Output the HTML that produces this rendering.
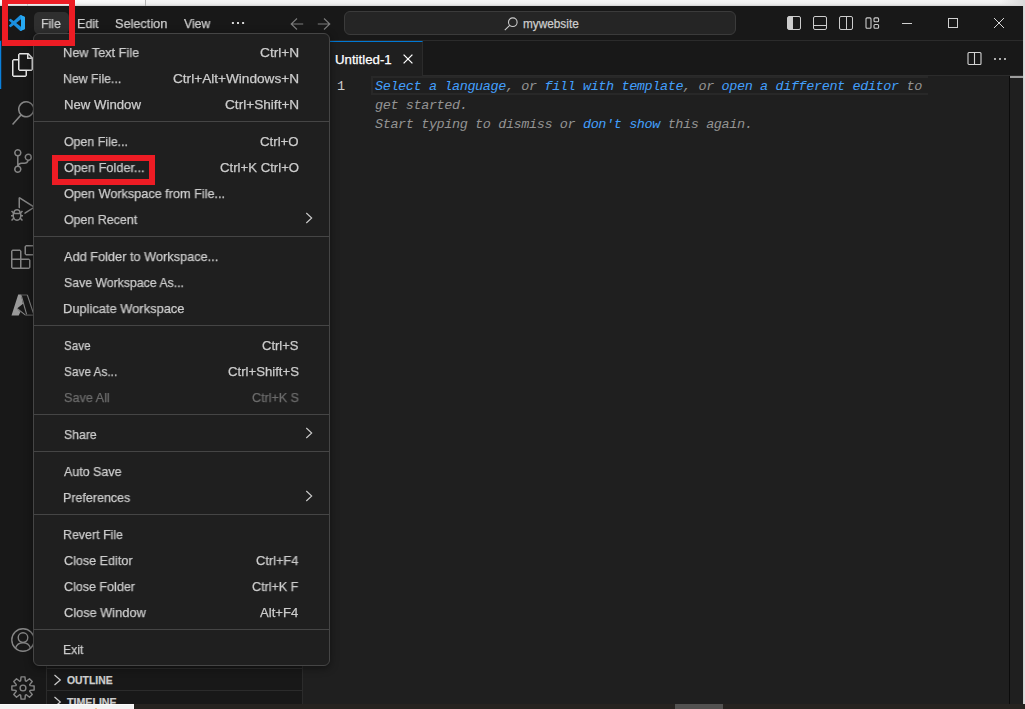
<!DOCTYPE html>
<html>
<head>
<meta charset="utf-8">
<title>mywebsite - Visual Studio Code</title>
<style>
*{box-sizing:border-box;margin:0;padding:0}
html,body{width:1025px;height:709px;overflow:hidden;background:#f3f3f3}
body{font-family:"Liberation Sans",sans-serif;font-size:13px;color:#ccc;position:relative}
.abs{position:absolute}
.t{position:absolute;white-space:pre;height:20px;transform-origin:0 50%;-webkit-text-stroke:0.25px currentColor}
#win{left:0;top:6px;width:1023px;height:698px;background:#1f1f1f}
#titlebar{left:0;top:6px;width:1023px;height:35px;background:#181818;border-bottom:1px solid #2b2b2b}
#filebtn{left:34px;top:12px;width:35px;height:22px;background:#2f2f2f;border-radius:5px}
#search{left:344px;top:11px;width:392px;height:24px;background:#252525;border:1px solid #3b3b3b;border-radius:6px}
#activity{left:0;top:41px;width:47px;height:663px;background:#181818;border-right:1px solid #2b2b2b}
#sidebar{left:47px;top:41px;width:256px;height:663px;background:#181818;border-right:1px solid #2b2b2b}
#tabs{left:303px;top:41px;width:720px;height:35px;background:#181818;border-bottom:1px solid #2b2b2b}
#tab{left:303px;top:41px;width:120px;height:35px;background:#1f1f1f;border-top:1px solid #0078d4;border-right:1px solid #2b2b2b}
.code{position:absolute;font-family:"Liberation Mono",monospace;font-size:13.5px;letter-spacing:-0.4px;font-style:italic;color:#939393;white-space:pre;height:19px;line-height:19px;left:375px}
.code b{font-weight:normal;color:#439ffc}
#menu{left:33px;top:33px;width:297px;height:633px;background:#1f1f1f;border:1px solid #454545;border-radius:6px;box-shadow:0 2px 8px rgba(0,0,0,.45)}
.sep{left:34px;width:295px;height:1px;background:#454545}
.red{border:6px solid #ed1c24}
svg{overflow:visible}
</style>
</head>
<body>
<!-- desktop behind the window -->
<div class="abs" style="left:0;top:0;width:1025px;height:6px;background:linear-gradient(#f4f4f4 0,#f0f0f0 50%,#e2e2e2 85%,#c9c9c9 100%)"></div>
<div class="abs" style="left:0;top:0;width:145px;height:5px;background:linear-gradient(#f9f9f9 0,#f4f4f4 60%,#e4e4e4 100%)"></div>
<div class="abs" style="left:27px;top:0;width:1px;height:6px;background:#c4c4c4"></div>
<div class="abs" style="left:145px;top:0;width:1px;height:6px;background:#b4b4b4"></div>
<div class="abs" style="left:1023px;top:0;width:2px;height:709px;background:linear-gradient(90deg,#cfcfcf,#e2e2e2)"></div>
<div class="abs" style="left:1000px;top:0;width:25px;height:6px;background:linear-gradient(90deg,rgba(215,215,215,0),#dadada)"></div>

<div id="win" class="abs"></div>
<div id="titlebar" class="abs"></div>
<div id="filebtn" class="abs"></div>
<div id="search" class="abs"></div>

<div id="activity" class="abs"></div>
<div id="sidebar" class="abs"></div>
<div id="tabs" class="abs"></div>
<div id="tab" class="abs"></div>

<!-- editor -->
<div class="abs" style="left:371px;top:76px;width:557px;height:19px;border:2px solid #282828;border-right:none"></div>
<div class="code" style="left:337px;top:77px;font-style:normal;color:#cccccc">1</div>
<div class="code" style="top:77px"><b>Select a language</b>, or <b>fill with template</b>, or <b>open a different editor</b> to</div>
<div class="code" style="top:96px">get started.</div>
<div class="code" style="top:115px">Start typing to dismiss or <b>don't show</b> this again.</div>
<!-- scrollbar / overview ruler -->
<div class="abs" style="left:1009px;top:76px;width:1px;height:628px;background:#0b0b0b"></div>
<div class="abs" style="left:1010px;top:76px;width:13px;height:2px;background:#9c9c9c"></div>

<!-- sidebar panes -->
<div class="abs" style="left:47px;top:668px;width:255px;height:1px;background:#2b2b2b"></div>
<div class="abs" style="left:47px;top:690px;width:255px;height:1px;background:#2b2b2b"></div>


<!-- vscode logo -->
<svg class="abs" style="left:9px;top:15px" width="16" height="16" viewBox="0 0 100 100">
  <path d="M96.5 10.8 75.9.9a6.2 6.2 0 0 0-7.1 1.2L29.4 38 12.200 25a4.200 4.200 0 0 0-5.300.200L1.400 30.300a4.200 4.200 0 0 0 0 6.200L16.300 50 1.400 63.600a4.200 4.200 0 0 0 0 6.200l5.500 5a4.200 4.200 0 0 0 5.300.200L29.400 62l39.400 36a6.200 6.200 0 0 0 7.100 1.200l20.600-9.900A6.200 6.200 0 0 0 100 83.600V16.400a6.200 6.200 0 0 0-3.500-5.600ZM75 72.700 45.100 50 75 27.300Z" fill="#1b8fe0"/>
  <path d="M75.900.9a6.200 6.200 0 0 0-4.400-.3L75 27.300v45.400l-3.500 26.700a6.200 6.200 0 0 0 4.400-.300l20.600-9.900A6.200 6.200 0 0 0 100 83.600V16.400a6.200 6.200 0 0 0-3.500-5.600Z" fill="#27a9f2"/>
</svg>
<!-- title bar: dots, arrows, search icon -->
<svg class="abs" style="left:230px;top:20px" width="16" height="6" viewBox="0 0 16 6"><rect x="1.900" y="2" width="2" height="2" fill="#d6d6d6"/><rect x="7" y="2" width="2" height="2" fill="#d6d6d6"/><rect x="12.100" y="2" width="2" height="2" fill="#d6d6d6"/></svg>
<svg class="abs" style="left:288.400px;top:15.500px" width="16" height="16" viewBox="0 0 16 16"><path d="M9 2.500 3.200 8 9 13.500M3.200 8H15.200" fill="none" stroke="#7c7c7c" stroke-width="1.100"/></svg>
<svg class="abs" style="left:317px;top:15.500px" width="16" height="16" viewBox="0 0 16 16"><path d="M7 2.500 12.800 8 7 13.500M12.800 8H.8" fill="none" stroke="#7c7c7c" stroke-width="1.100"/></svg>
<svg class="abs" style="left:503px;top:15.500px" width="16" height="16" viewBox="0 0 16 16"><circle cx="9.800" cy="6.200" r="4.300" fill="none" stroke="#ccc" stroke-width="1.100"/><path d="M6.700 9.300 1.800 14.200" stroke="#ccc" stroke-width="1.100"/></svg>
<!-- layout controls -->
<svg class="abs" style="left:787px;top:16px" width="14" height="14" viewBox="0 0 14 14"><rect x=".5" y=".5" width="13" height="13" rx="1.500" fill="none" stroke="#ccc"/><path d="M1 1h5v12H1z" fill="#ccc"/></svg>
<svg class="abs" style="left:813px;top:16px" width="14" height="14" viewBox="0 0 14 14"><rect x=".5" y=".5" width="13" height="13" rx="1.500" fill="none" stroke="#ccc"/><path d="M1 9.500h12" stroke="#ccc"/></svg>
<svg class="abs" style="left:839px;top:16px" width="14" height="14" viewBox="0 0 14 14"><rect x=".5" y=".5" width="13" height="13" rx="1.500" fill="none" stroke="#ccc"/><path d="M7.500 1v12" stroke="#ccc"/></svg>
<svg class="abs" style="left:865px;top:16px" width="15" height="14" viewBox="0 0 15 14"><rect x="1" y="1.900" width="5" height="10.400" rx="1" fill="none" stroke="#ccc" stroke-width="1.100"/><rect x="9" y="1.900" width="4.600" height="3.800" rx="1" fill="none" stroke="#ccc" stroke-width="1.100"/><rect x="9" y="8.500" width="4.600" height="3.800" rx="1" fill="none" stroke="#ccc" stroke-width="1.100"/></svg>
<!-- window controls -->
<div class="abs" style="left:902px;top:23px;width:10px;height:1px;background:#d0d0d0"></div>
<div class="abs" style="left:948px;top:18px;width:10px;height:10px;border:1px solid #d0d0d0"></div>
<svg class="abs" style="left:994px;top:18px" width="10" height="10" viewBox="0 0 10 10"><path d="M0 0 10 10M10 0 0 10" stroke="#d8d8d8" stroke-width="1"/></svg>
<!-- tab close + editor actions -->
<svg class="abs" style="left:403px;top:54px" width="10" height="10" viewBox="0 0 10 10"><path d="M.6.600 9.400 9.400M9.400.600.600 9.400" stroke="#fff" stroke-width="1.300"/></svg>
<svg class="abs" style="left:967px;top:51px" width="15" height="15" viewBox="0 0 15 15"><rect x="1" y="1.500" width="13" height="12" rx="1" fill="none" stroke="#d4d4d4" stroke-width="1.100"/><path d="M7.500 1.500v12" stroke="#d4d4d4" stroke-width="1.100"/></svg>
<svg class="abs" style="left:992px;top:56px" width="16" height="6" viewBox="0 0 16 6"><circle cx="3" cy="3" r="1.050" fill="#d4d4d4"/><circle cx="8" cy="3" r="1.050" fill="#d4d4d4"/><circle cx="13" cy="3" r="1.050" fill="#d4d4d4"/></svg>

<!-- activity bar -->
<div class="abs" style="left:0;top:41px;width:1px;height:48px;background:#0a80dc"></div><div class="abs" style="left:1px;top:41px;width:1px;height:48px;background:#0078d4;opacity:.25"></div>
<svg class="abs" style="left:11px;top:53px" width="24" height="24" viewBox="0 0 24 24"><path fill="#e6e6e6" d="M17.500 0h-9L7 1.500V6H2.500L1 7.500v15.070L2.500 24h12.070L16 22.570V18h4.700l1.300-1.430V4.500L17.500 0zm0 2.120l2.380 2.380H17.500V2.120zm-3 20.380h-12v-15H7v9.070L8.500 18h6v4.500zm6-6h-12v-15H16V6h4.500v10.500z"/></svg>
<svg class="abs" style="left:11px;top:101px" width="24" height="24" viewBox="0 0 24 24"><path fill="#858585" d="M15.250 0a8.250 8.250 0 0 0-6.180 13.720L1 22.880l1.120 1.120 8.050-9.120A8.251 8.251 0 1 0 15.250.010V0zm0 15a6.750 6.750 0 1 1 0-13.500 6.750 6.750 0 0 1 0 13.500z"/></svg>
<svg class="abs" style="left:11px;top:149px" width="24" height="24" viewBox="0 0 24 24"><path fill="#858585" d="M21.007 8.222A3.738 3.738 0 0 0 15.045 5.200a3.737 3.737 0 0 0 1.156 6.583 2.988 2.988 0 0 1-2.668 1.670h-2.990a4.456 4.456 0 0 0-2.989 1.165V7.400a3.737 3.737 0 1 0-1.494 0v9.117a3.776 3.776 0 1 0 1.816.099 2.990 2.990 0 0 1 2.668-1.667h2.990a4.484 4.484 0 0 0 4.223-3.039 3.736 3.736 0 0 0 3.250-3.687zM4.565 3.738a2.242 2.242 0 1 1 4.484 0 2.242 2.242 0 0 1-4.484 0zm4.484 16.441a2.242 2.242 0 1 1-4.484 0 2.242 2.242 0 0 1 4.484 0zm8.221-9.715a2.242 2.242 0 1 1 0-4.485 2.242 2.242 0 0 1 0 4.485z"/></svg>
<svg class="abs" style="left:11px;top:197px" width="24" height="24" viewBox="0 0 24 24"><path fill="#858585" d="M10.940 13.500l-1.320 1.320a3.730 3.730 0 0 0-7.240 0L1.060 13.500 0 14.560l1.720 1.720-.22.220V18H0v1.500h1.500v.080c.077.489.214.966.410 1.420L0 22.940 1.060 24l1.650-1.650A4.308 4.308 0 0 0 6 24a4.310 4.310 0 0 0 3.290-1.650L10.940 24 12 22.940 10.090 21c.198-.464.336-.951.410-1.450v-.1H12V18h-1.500v-1.500l-.22-.22L12 14.560l-1.060-1.060zM6 13.500a2.250 2.250 0 0 1 2.250 2.250h-4.500A2.250 2.250 0 0 1 6 13.500zm3 6a3.330 3.330 0 0 1-3 3 3.330 3.330 0 0 1-3-3v-2.250h6v2.250zm14.760-9.900v1.260L13.500 17.370V15.600l8.500-5.370L9 2v9.460a5.070 5.070 0 0 0-1.500-.72V.630L8.640 0l15.120 9.600z"/></svg>
<svg class="abs" style="left:11px;top:245px" width="24" height="24" viewBox="0 0 24 24"><path fill="#858585" d="M13.500 1.500L15 0h7.500L24 1.500V9l-1.500 1.500H15L13.500 9V1.500zm1.500 0V9h7.500V1.500H15zM0 15V6l1.500-1.500H9L10.500 6v7.500H18l1.500 1.500v7.500L18 24H1.500L0 22.500V15zm9-1.500V6H1.500v7.500H9zM9 15H1.500v7.500H9V15zm1.500 7.500H18V15h-7.500v7.500z"/></svg>
<!-- azure -->
<svg class="abs" style="left:11px;top:293px" width="24" height="24" viewBox="0 0 24 24"><path d="M7.200 1.500H9.900L12 10.800 6 15.400l3.400 3.600-1.700 3.600H.5Z" fill="#9a9a9a"/><path d="M10.100 1.800 15.600 21.300M16.300 1.800 23 22M6 15.400l8.200 6.500" fill="none" stroke="#858585" stroke-width="1.100"/><path d="M9.900 2H16.300" stroke="#5a5a5a" stroke-width="1"/><path d="M14.200 22.100H23" stroke="#6a6a6a" stroke-width="1"/></svg>
<!-- account -->
<svg class="abs" style="left:11px;top:628px" width="24" height="24" viewBox="0 0 24 24"><circle cx="12" cy="12" r="11.200" fill="none" stroke="#858585" stroke-width="1.400"/><circle cx="12" cy="9.600" r="4.800" fill="none" stroke="#858585" stroke-width="1.400"/><path d="M4.500 20.300c1-3.400 3.900-5.500 7.500-5.500s6.500 2.100 7.500 5.500" fill="none" stroke="#858585" stroke-width="1.400"/></svg>
<!-- gear -->
<svg class="abs" style="left:11px;top:676px" width="24" height="24" viewBox="0 0 24 24"><path d="M9.63 4.89 L10.06 0.87 L13.94 0.87 L14.37 4.89 L15.35 5.29 L18.50 2.75 L21.25 5.50 L18.71 8.65 L19.11 9.63 L23.13 10.06 L23.13 13.94 L19.11 14.37 L18.71 15.35 L21.25 18.50 L18.50 21.25 L15.35 18.71 L14.37 19.11 L13.94 23.13 L10.06 23.13 L9.63 19.11 L8.65 18.71 L5.50 21.25 L2.75 18.50 L5.29 15.35 L4.89 14.37 L0.87 13.94 L0.87 10.06 L4.89 9.63 L5.29 8.65 L2.75 5.50 L5.50 2.75 L8.65 5.29Z" fill="none" stroke="#858585" stroke-width="1.400" stroke-linejoin="round"/><circle cx="12" cy="12" r="2.900" fill="none" stroke="#858585" stroke-width="1.400"/></svg>
<!-- sidebar chevrons -->
<svg class="abs" style="left:50px;top:671.800px" width="16" height="16" viewBox="0 0 16 16"><path d="M4.500 3 10.300 8l-5.800 5" fill="none" stroke="#ccc" stroke-width="1.200"/></svg>
<svg class="abs" style="left:50px;top:693.800px" width="16" height="16" viewBox="0 0 16 16"><path d="M4.500 3 10.300 8l-5.800 5" fill="none" stroke="#ccc" stroke-width="1.200"/></svg>

<!-- menu -->
<div id="menu" class="abs"></div>
<div class="abs sep" style="top:121px"></div>
<div class="abs sep" style="top:236px"></div>
<div class="abs sep" style="top:325px"></div>
<div class="abs sep" style="top:414px"></div>
<div class="abs sep" style="top:451px"></div>
<div class="abs sep" style="top:514px"></div>
<div class="abs sep" style="top:629px"></div>
<svg class="abs" style="left:300.5px;top:210.3px" width="16" height="16" viewBox="0 0 16 16"><path d="M5.3 3.0 L10.7 8 L5.3 13.0" fill="none" stroke="#cccccc" stroke-width="1.1"/></svg><svg class="abs" style="left:300.5px;top:425.3px" width="16" height="16" viewBox="0 0 16 16"><path d="M5.3 3.0 L10.7 8 L5.3 13.0" fill="none" stroke="#cccccc" stroke-width="1.1"/></svg><svg class="abs" style="left:300.5px;top:488.3px" width="16" height="16" viewBox="0 0 16 16"><path d="M5.3 3.0 L10.7 8 L5.3 13.0" fill="none" stroke="#cccccc" stroke-width="1.1"/></svg>

<div class="t" style="left:63.15px;top:43.00px;font:normal normal 13px/20px 'Liberation Sans',sans-serif;color:#cccccc;transform:scaleX(0.9801);will-change:transform;">New Text File</div>
<div class="t" style="left:260.05px;top:43.00px;font:normal normal 13px/20px 'Liberation Sans',sans-serif;color:#cccccc;transform:scaleX(1.0547);will-change:transform;">Ctrl+N</div>
<div class="t" style="left:63.18px;top:69.00px;font:normal normal 13px/20px 'Liberation Sans',sans-serif;color:#cccccc;transform:scaleX(0.9497);will-change:transform;">New File...</div>
<div class="t" style="left:173.33px;top:69.00px;font:normal normal 13px/20px 'Liberation Sans',sans-serif;color:#cccccc;transform:scaleX(1.0476);will-change:transform;">Ctrl+Alt+Windows+N</div>
<div class="t" style="left:63.67px;top:95.00px;font:normal normal 13px/20px 'Liberation Sans',sans-serif;color:#cccccc;transform:scaleX(1.0139);will-change:transform;">New Window</div>
<div class="t" style="left:225.47px;top:95.00px;font:normal normal 13px/20px 'Liberation Sans',sans-serif;color:#cccccc;transform:scaleX(1.0482);will-change:transform;">Ctrl+Shift+N</div>
<div class="t" style="left:64.46px;top:132.00px;font:normal normal 13px/20px 'Liberation Sans',sans-serif;color:#cccccc;transform:scaleX(0.9518);will-change:transform;">Open File...</div>
<div class="t" style="left:259.90px;top:132.00px;font:normal normal 13px/20px 'Liberation Sans',sans-serif;color:#cccccc;transform:scaleX(1.0183);will-change:transform;">Ctrl+O</div>
<div class="t" style="left:63.86px;top:158.00px;font:normal normal 13px/20px 'Liberation Sans',sans-serif;color:#cccccc;transform:scaleX(0.9781);will-change:transform;">Open Folder...</div>
<div class="t" style="left:219.73px;top:158.00px;font:normal normal 13px/20px 'Liberation Sans',sans-serif;color:#cccccc;transform:scaleX(1.0138);will-change:transform;">Ctrl+K Ctrl+O</div>
<div class="t" style="left:64.46px;top:184.00px;font:normal normal 13px/20px 'Liberation Sans',sans-serif;color:#cccccc;transform:scaleX(0.9750);will-change:transform;">Open Workspace from File...</div>
<div class="t" style="left:64.43px;top:210.00px;font:normal normal 13px/20px 'Liberation Sans',sans-serif;color:#cccccc;transform:scaleX(0.9549);will-change:transform;">Open Recent</div>
<div class="t" style="left:64.46px;top:247.00px;font:normal normal 13px/20px 'Liberation Sans',sans-serif;color:#cccccc;transform:scaleX(0.9809);will-change:transform;">Add Folder to Workspace...</div>
<div class="t" style="left:63.82px;top:273.00px;font:normal normal 13px/20px 'Liberation Sans',sans-serif;color:#cccccc;transform:scaleX(0.9453);will-change:transform;">Save Workspace As...</div>
<div class="t" style="left:63.13px;top:299.00px;font:normal normal 13px/20px 'Liberation Sans',sans-serif;color:#cccccc;transform:scaleX(0.9910);will-change:transform;">Duplicate Workspace</div>
<div class="t" style="left:64.24px;top:336.00px;font:normal normal 13px/20px 'Liberation Sans',sans-serif;color:#cccccc;transform:scaleX(0.8936);will-change:transform;">Save</div>
<div class="t" style="left:262.43px;top:336.00px;font:normal normal 13px/20px 'Liberation Sans',sans-serif;color:#cccccc;transform:scaleX(1.0002);will-change:transform;">Ctrl+S</div>
<div class="t" style="left:64.04px;top:362.00px;font:normal normal 13px/20px 'Liberation Sans',sans-serif;color:#cccccc;transform:scaleX(0.9083);will-change:transform;">Save As...</div>
<div class="t" style="left:227.56px;top:362.00px;font:normal normal 13px/20px 'Liberation Sans',sans-serif;color:#cccccc;transform:scaleX(1.0124);will-change:transform;">Ctrl+Shift+S</div>
<div class="t" style="left:63.96px;top:388.00px;font:normal normal 13px/20px 'Liberation Sans',sans-serif;color:#6c6c6c;transform:scaleX(0.9727);will-change:transform;">Save All</div>
<div class="t" style="left:251.70px;top:388.00px;font:normal normal 13px/20px 'Liberation Sans',sans-serif;color:#6c6c6c;transform:scaleX(0.9644);will-change:transform;">Ctrl+K S</div>
<div class="t" style="left:64.21px;top:425.00px;font:normal normal 13px/20px 'Liberation Sans',sans-serif;color:#cccccc;transform:scaleX(0.9391);will-change:transform;">Share</div>
<div class="t" style="left:64.40px;top:462.00px;font:normal normal 13px/20px 'Liberation Sans',sans-serif;color:#cccccc;transform:scaleX(0.9589);will-change:transform;">Auto Save</div>
<div class="t" style="left:63.17px;top:488.00px;font:normal normal 13px/20px 'Liberation Sans',sans-serif;color:#cccccc;transform:scaleX(0.9601);will-change:transform;">Preferences</div>
<div class="t" style="left:63.17px;top:525.00px;font:normal normal 13px/20px 'Liberation Sans',sans-serif;color:#cccccc;transform:scaleX(0.9551);will-change:transform;">Revert File</div>
<div class="t" style="left:64.41px;top:551.00px;font:normal normal 13px/20px 'Liberation Sans',sans-serif;color:#cccccc;transform:scaleX(0.9677);will-change:transform;">Close Editor</div>
<div class="t" style="left:256.42px;top:551.00px;font:normal normal 13px/20px 'Liberation Sans',sans-serif;color:#cccccc;transform:scaleX(0.9865);will-change:transform;">Ctrl+F4</div>
<div class="t" style="left:64.41px;top:577.00px;font:normal normal 13px/20px 'Liberation Sans',sans-serif;color:#cccccc;transform:scaleX(0.9624);will-change:transform;">Close Folder</div>
<div class="t" style="left:252.00px;top:577.00px;font:normal normal 13px/20px 'Liberation Sans',sans-serif;color:#cccccc;transform:scaleX(0.9648);will-change:transform;">Ctrl+K F</div>
<div class="t" style="left:64.41px;top:603.00px;font:normal normal 13px/20px 'Liberation Sans',sans-serif;color:#cccccc;transform:scaleX(0.9839);will-change:transform;">Close Window</div>
<div class="t" style="left:260.40px;top:603.00px;font:normal normal 13px/20px 'Liberation Sans',sans-serif;color:#cccccc;transform:scaleX(1.0079);will-change:transform;">Alt+F4</div>
<div class="t" style="left:63.19px;top:640.00px;font:normal normal 13px/20px 'Liberation Sans',sans-serif;color:#cccccc;transform:scaleX(0.9358);will-change:transform;">Exit</div>
<div class="t" style="left:41.20px;top:13.70px;font:normal normal 13px/20px 'Liberation Sans',sans-serif;color:#cccccc;transform:scaleX(0.9483);will-change:transform;">File</div>
<div class="t" style="left:76.81px;top:13.70px;font:normal normal 13px/20px 'Liberation Sans',sans-serif;color:#cccccc;transform:scaleX(0.9657);will-change:transform;">Edit</div>
<div class="t" style="left:114.79px;top:13.70px;font:normal normal 13px/20px 'Liberation Sans',sans-serif;color:#cccccc;transform:scaleX(0.9788);will-change:transform;">Selection</div>
<div class="t" style="left:183.60px;top:13.70px;font:normal normal 13px/20px 'Liberation Sans',sans-serif;color:#cccccc;transform:scaleX(0.9421);will-change:transform;">View</div>
<div class="t" style="left:523.42px;top:14.34px;font:normal normal 12px/20px 'Liberation Sans',sans-serif;color:#cccccc;transform:scaleX(0.9832);">mywebsite</div>
<div class="t" style="left:334.62px;top:50.10px;font:normal normal 13px/20px 'Liberation Sans',sans-serif;color:#ffffff;transform:scaleX(1.0184);">Untitled-1</div>
<div class="t" style="left:67.02px;top:669.99px;font:normal bold 11px/20px 'Liberation Sans',sans-serif;color:#cccccc;transform:scaleX(0.9436);">OUTLINE</div>
<div class="t" style="left:67.30px;top:691.99px;font:normal bold 11px/20px 'Liberation Sans',sans-serif;color:#cccccc;transform:scaleX(0.9668);">TIMELINE</div>

<!-- bottom strip (taskbar) -->
<div class="abs" style="left:134px;top:703.600px;width:891px;height:6px;background:#262320"></div>
<div class="abs" style="left:0;top:703.800px;width:134px;height:6px;background:#f3f3f3;border-top:1px solid #fbfbfb;border-right:1px solid #fafafa"></div>
<div class="abs" style="left:675px;top:704px;width:48px;height:5px;background:#525150"></div>
<div class="abs" style="left:95px;top:707.500px;width:2px;height:2px;background:#f3c98f"></div>
<!-- annotations -->
<div class="abs red" style="left:2px;top:-2px;width:73px;height:48px"></div>
<div class="abs red" style="left:52px;top:155px;width:103px;height:30px"></div>
</body>
</html>
